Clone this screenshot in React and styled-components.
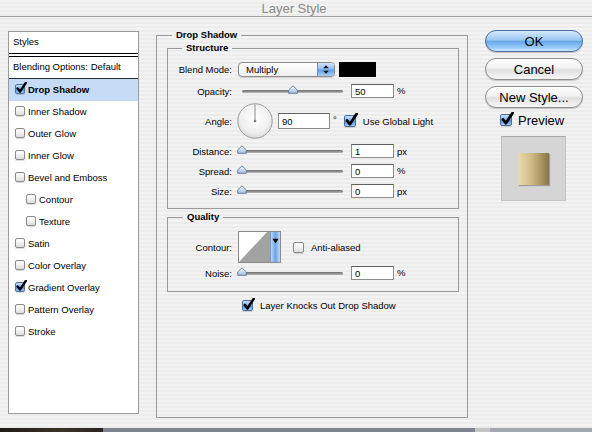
import React from "react";
import styled, { createGlobalStyle } from "styled-components";

const GlobalStyle = createGlobalStyle`
  html, body {
    margin: 0;
    padding: 0;
  }
  body {
    font-family: "Liberation Sans", Arial, sans-serif;
  }
`;

const STYLE_ITEMS = [
  { name: "Drop Shadow", checked: true, active: true },
  { name: "Inner Shadow" },
  { name: "Outer Glow" },
  { name: "Inner Glow" },
  { name: "Bevel and Emboss" },
  { name: "Contour", indent: true },
  { name: "Texture", indent: true },
  { name: "Satin" },
  { name: "Color Overlay" },
  { name: "Gradient Overlay", checked: true },
  { name: "Pattern Overlay" },
  { name: "Stroke" },
];

const CheckBox = ({ checked, size = 11 }) => (
  <Box $size={size} $checked={checked}>
    {checked && (
      <CheckMark viewBox="0 0 12 12" width={size + 2} height={size + 2}>
        <path
          d="M2.6 6.4 L5 9.6 L10.8 0.8"
          fill="none"
          stroke="#000"
          strokeWidth="2.4"
          strokeLinecap="round"
          strokeLinejoin="round"
        />
      </CheckMark>
    )}
  </Box>
);

const Slider = ({ pct }) => (
  <Track>
    <Thumb viewBox="0 0 10 9" width="10" height="9" style={{ left: `${pct}%` }}>
      <defs>
        <linearGradient id="thumbFill" x1="0" y1="0" x2="0" y2="1">
          <stop offset="0" stopColor="#ffffff" />
          <stop offset="1" stopColor="#9dbbe3" />
        </linearGradient>
      </defs>
      <path
        d="M0.7 8.3 V5 L5 0.8 L9.3 5 V8.3 Z"
        fill="url(#thumbFill)"
        stroke="#5f7797"
        strokeWidth="0.9"
        strokeLinejoin="round"
      />
    </Thumb>
  </Track>
);

const SliderRow = ({ label, value, unit, pct, raised }) => (
  <Row $h={20}>
    <Label>{label}</Label>
    <Slider pct={pct} />
    <NumberField $w={43} $h={14} $ml={8} defaultValue={value} readOnly />
    <Unit $top={raised ? 4 : 0}>{unit}</Unit>
  </Row>
);

const App = () => {
  return (
    <Window>
      <GlobalStyle />
      <TitleBar>Layer Style</TitleBar>
      <Body>
        <StylesList>
          <ListHeader>Styles</ListHeader>
          <BlendingRow>Blending Options: Default</BlendingRow>
          {STYLE_ITEMS.map((item) => (
            <StyleItem key={item.name} $active={item.active} $indent={item.indent}>
              <CheckBox checked={item.checked} size={10} />
              <span>{item.name}</span>
            </StyleItem>
          ))}
        </StylesList>

        <Group $w={312} $h={389} $mt={12} $pad="1px 8px 0 10px">
          <Legend $ml={5}>Drop Shadow</Legend>

          <Group $pad="5px 0 7px 0">
            <Legend $ml={14}>Structure</Legend>
            <Row $h={20}>
              <Label>Blend Mode:</Label>
              <Popup>
                <PopupText>Multiply</PopupText>
                <PopupArrows>
                  <svg viewBox="0 0 8 11" width="8" height="11">
                    <path d="M1.2 4.2 L4 1.2 L6.8 4.2 Z" fill="#111" />
                    <path d="M1.2 6.8 L4 9.8 L6.8 6.8 Z" fill="#111" />
                  </svg>
                </PopupArrows>
              </Popup>
              <Swatch />
            </Row>
            <Row $h={20} $mt={2}>
              <Label>Opacity:</Label>
              <Slider pct={50} />
              <NumberField $w={43} $h={14} $ml={8} defaultValue="50" readOnly />
              <Unit $top={4}>%</Unit>
            </Row>
            <Row $h={36} $mt={2}>
              <Label>Angle:</Label>
              <Dial viewBox="0 0 36 36" width="36" height="36">
                <defs>
                  <radialGradient id="dialFill" cx="0.5" cy="0.4" r="0.6">
                    <stop offset="0" stopColor="#ffffff" />
                    <stop offset="0.7" stopColor="#f0f0f0" />
                    <stop offset="1" stopColor="#d9d9d9" />
                  </radialGradient>
                </defs>
                <circle cx="18" cy="18" r="17.2" fill="url(#dialFill)" stroke="#9c9c9c" strokeWidth="1" />
                <line x1="18" y1="18" x2="18" y2="1.5" stroke="#8c8c8c" strokeWidth="1" />
                <circle cx="18" cy="18" r="1.3" fill="#7a7a7a" />
              </Dial>
              <NumberField $w={52} $h={16} $ml={5} defaultValue="90" readOnly />
              <Unit $top={11}>°</Unit>
              <CheckLabel $ml={7}>
                <CheckBox checked size={12} />
                <span>Use Global Light</span>
              </CheckLabel>
            </Row>
            <Row $h={20} $mt={2}>
              <Label>Distance:</Label>
              <Slider pct={0} />
              <NumberField $w={43} $h={14} $ml={8} defaultValue="1" readOnly />
              <Unit>px</Unit>
            </Row>
            <SliderRow label="Spread:" value="0" unit="%" pct={0} raised />
            <SliderRow label="Size:" value="0" unit="px" pct={0} />
          </Group>

          <Group $mt={2} $pad="8px 0 8px 0">
            <Legend $ml={15}>Quality</Legend>
            <Row $h={32}>
              <Label>Contour:</Label>
              <ContourPicker>
                <svg viewBox="0 0 31 30" width="31" height="30">
                  <rect x="0" y="0" width="31" height="30" fill="#fff" />
                  <path d="M0 30 L28 0 L31 0 L31 30 Z" fill="#a2a2a2" />
                </svg>
                <ContourArrow>
                  <svg viewBox="0 0 8 6" width="7" height="6">
                    <path d="M0.5 0.5 L7.5 0.5 L4 5.5 Z" fill="#000" />
                  </svg>
                </ContourArrow>
              </ContourPicker>
              <CheckLabel $ml={12}>
                <CheckBox size={11} />
                <span>Anti-aliased</span>
              </CheckLabel>
            </Row>
            <SliderRow label="Noise:" value="0" unit="%" pct={0} raised />
          </Group>

          <KnockRow>
            <CheckLabel>
              <CheckBox checked size={11} />
              <span>Layer Knocks Out Drop Shadow</span>
            </CheckLabel>
          </KnockRow>
        </Group>

        <SideColumn>
          <Button $primary>OK</Button>
          <Button>Cancel</Button>
          <Button>New Style...</Button>
          <PreviewToggle>
            <CheckBox checked size={12} />
            <span>Preview</span>
          </PreviewToggle>
          <PreviewBox>
            <PreviewSwatch />
          </PreviewBox>
        </SideColumn>
      </Body>
      <Desktop>
        <DesktopPart $w={103} $bg="linear-gradient(to right, #1f1c16, #3b3325 60%, #2a261e)" />
        <DesktopPart $w={372} $bg="#7f8590" />
        <DesktopPart $w={15} $bg="#c4c4c4" />
        <DesktopPart $w={102} $bg="#a3a7ae" />
      </Desktop>
    </Window>
  );
};

export default App;

const Window = styled.div`
  width: 592px;
  height: 432px;
  overflow: hidden;
  display: flex;
  flex-direction: column;
  background: repeating-linear-gradient(
    to bottom,
    #f3f3f3 0px,
    #f3f3f3 2px,
    #ececec 2px,
    #ececec 4px
  );
  font-family: "Liberation Sans", Arial, sans-serif;
  font-size: 9.5px;
  color: #000;
`;

const TitleBar = styled.div`
  height: 16px;
  flex-shrink: 0;
  border-bottom: 1px solid #a2a2a2;
  display: flex;
  align-items: center;
  justify-content: center;
  padding-right: 4px;
  font-size: 13px;
  color: #8a8a8a;
`;

const Body = styled.div`
  flex: 1;
  display: flex;
  align-items: flex-start;
  padding-left: 8px;
`;

const StylesList = styled.div`
  margin-top: 14px;
  width: 131px;
  height: 383px;
  box-sizing: border-box;
  border: 1px solid #9b9b9b;
  background: #fff;
  display: flex;
  flex-direction: column;
`;

const ListHeader = styled.div`
  height: 22px;
  box-sizing: border-box;
  border-bottom: 1px solid #000;
  display: flex;
  align-items: center;
  padding: 0 0 2px 4px;
`;

const BlendingRow = styled.div`
  margin-top: 2px;
  height: 23px;
  box-sizing: border-box;
  border-top: 1px solid #000;
  border-bottom: 1px solid #2a2a2a;
  display: flex;
  align-items: center;
  padding: 0 0 2px 4px;
`;

const StyleItem = styled.div`
  height: 22px;
  box-sizing: border-box;
  flex-shrink: 0;
  display: flex;
  align-items: center;
  gap: 3px;
  padding: 0 0 2px ${(p) => (p.$indent ? 17 : 6)}px;
  background: ${(p) => (p.$active ? "#c5dbf6" : "transparent")};
  font-weight: ${(p) => (p.$active ? "bold" : "normal")};
`;

const Box = styled.span`
  position: relative;
  flex-shrink: 0;
  display: inline-block;
  width: ${(p) => p.$size}px;
  height: ${(p) => p.$size}px;
  box-sizing: border-box;
  border: 1px solid ${(p) => (p.$checked ? "#4d6f9c" : "#8a8a8a")};
  border-radius: 2px;
  background: ${(p) =>
    p.$checked
      ? "linear-gradient(to bottom, #c8e0fa 0%, #7fb2ec 48%, #4f8fdc 52%, #9fcaf6 100%)"
      : "linear-gradient(to bottom, #ffffff 0%, #f1f1f1 50%, #dedede 100%)"};
  box-shadow: 0 1px 1px rgba(0, 0, 0, 0.15);
`;

const CheckMark = styled.svg`
  position: absolute;
  left: -1px;
  top: -3px;
`;

const Group = styled.fieldset`
  margin: ${(p) => p.$mt || 0}px 0 0 0;
  padding: ${(p) => p.$pad};
  border: 1px solid #999999;
  min-width: 0;
  box-sizing: border-box;
  ${(p) => (p.$w ? `width: ${p.$w}px; flex-shrink: 0; margin-left: 17px;` : "")}
  ${(p) => (p.$h ? `height: ${p.$h}px;` : "")}
`;

const Legend = styled.legend`
  margin-left: ${(p) => p.$ml}px;
  padding: 0 4px;
  font-weight: bold;
  font-size: 9.5px;
  line-height: 12px;
`;

const Row = styled.div`
  display: flex;
  align-items: center;
  height: ${(p) => p.$h}px;
  margin-top: ${(p) => p.$mt || 0}px;
`;

const Label = styled.div`
  width: 64px;
  flex-shrink: 0;
  text-align: right;
`;

const Popup = styled.div`
  margin-left: 6px;
  width: 97px;
  height: 15px;
  box-sizing: border-box;
  display: flex;
  border: 1px solid #8c8c8c;
  border-radius: 4px;
  overflow: hidden;
  background: linear-gradient(to bottom, #ffffff, #eeeeee);
  box-shadow: 0 1px 1px rgba(0, 0, 0, 0.15);
`;

const PopupText = styled.div`
  flex: 1;
  display: flex;
  align-items: center;
  padding-left: 7px;
`;

const PopupArrows = styled.div`
  width: 16px;
  display: flex;
  align-items: center;
  justify-content: center;
  border-left: 1px solid #6f8db8;
  background: linear-gradient(to bottom, #cfe4fb 0%, #8fbdf0 48%, #5c9be3 52%, #a8d0f8 100%);
`;

const Swatch = styled.div`
  margin-left: 4px;
  width: 37px;
  height: 15px;
  background: #000;
`;

const Track = styled.div`
  position: relative;
  margin-left: 10px;
  width: 101px;
  height: 3px;
  border-radius: 2px;
  background: linear-gradient(to bottom, #6a6a6a, #b8b8b8);
`;

const Thumb = styled.svg`
  position: absolute;
  top: -5px;
  transform: translateX(-50%);
`;

const NumberField = styled.input`
  margin-left: ${(p) => p.$ml}px;
  width: ${(p) => p.$w}px;
  height: ${(p) => p.$h}px;
  box-sizing: border-box;
  border: 1px solid #8c8c8c;
  border-top-color: #5e5e5e;
  padding: 0 3px;
  background: #fff;
  font-family: "Liberation Sans", Arial, sans-serif;
  font-size: 9.5px;
  color: #000;
  outline: none;
`;

const Unit = styled.span`
  margin-left: 3px;
  ${(p) => (p.$top ? `align-self: flex-start; margin-top: ${p.$top}px;` : "")}
`;

const Dial = styled.svg`
  margin-left: 5px;
  flex-shrink: 0;
`;

const CheckLabel = styled.label`
  display: flex;
  align-items: center;
  gap: 7px;
  margin-left: ${(p) => p.$ml || 0}px;
`;

const ContourPicker = styled.div`
  margin-left: 6px;
  display: flex;
  border: 1px solid #8a8a8a;
  height: 32px;
  box-sizing: border-box;
`;

const ContourArrow = styled.div`
  width: 10px;
  display: flex;
  justify-content: center;
  padding-top: 6px;
  box-sizing: border-box;
  border-left: 1px solid #7d9bc4;
  background: linear-gradient(to right, #b5d5f8, #6ea6e8 50%, #b9dafb);
`;

const KnockRow = styled.div`
  margin-top: 3px;
  height: 20px;
  display: flex;
  align-items: center;
  padding-left: 75px;
`;

const SideColumn = styled.div`
  margin-top: 13px;
  margin-left: 17px;
  width: 98px;
  display: flex;
  flex-direction: column;
  gap: 6px;
`;

const Button = styled.button`
  width: 98px;
  height: 22px;
  padding: 0;
  border-radius: 11px;
  border: 1px solid ${(p) => (p.$primary ? "#4b6e9f" : "#8e8e8e")};
  background: ${(p) =>
    p.$primary
      ? "linear-gradient(to bottom, #d6e9fc 0%, #9cc8f3 45%, #68a7ec 52%, #9ccdfa 85%, #cfe8ff 100%)"
      : "linear-gradient(to bottom, #ffffff 0%, #f1f1f1 45%, #dfdfdf 55%, #f7f7f7 100%)"};
  box-shadow: 0 1px 1px rgba(0, 0, 0, 0.2);
  font-family: "Liberation Sans", Arial, sans-serif;
  font-size: 13px;
  color: #000;
`;

const PreviewToggle = styled.label`
  margin-top: -2px;
  height: 16px;
  display: flex;
  align-items: center;
  gap: 6px;
  padding-left: 15px;
  font-size: 13px;
`;

const PreviewBox = styled.div`
  margin-top: 2px;
  margin-left: 16px;
  width: 65px;
  height: 65px;
  box-sizing: border-box;
  border: 1px solid #c2c2c2;
  border-top-color: #a8a8a8;
  background: #d5d5d5;
  display: flex;
  align-items: center;
  justify-content: center;
`;

const PreviewSwatch = styled.div`
  width: 31px;
  height: 32px;
  background: linear-gradient(to right, #eadcae 0%, #cdb984 45%, #8b7446 100%);
  box-shadow: 1px 1px 1px rgba(0, 0, 0, 0.25);
`;

const Desktop = styled.div`
  height: 4px;
  flex-shrink: 0;
  display: flex;
`;

const DesktopPart = styled.div`
  width: ${(p) => p.$w}px;
  background: ${(p) => p.$bg};
`;
